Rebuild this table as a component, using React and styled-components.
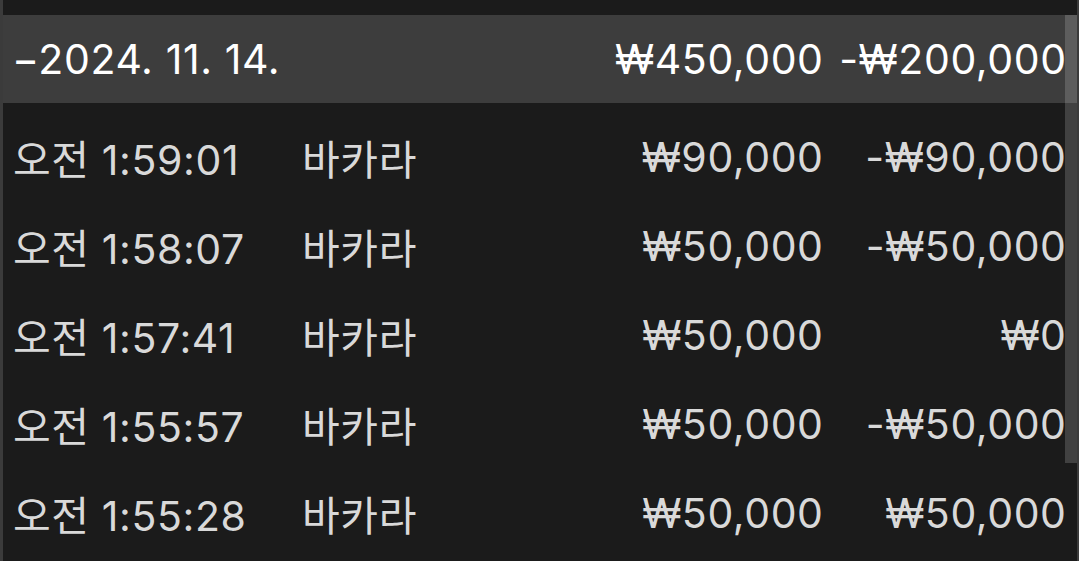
import styled, { createGlobalStyle } from 'styled-components';

const GlobalStyle = createGlobalStyle`
  html, body {
    margin: 0;
    padding: 0;
    background: #1b1b1b;
  }
`;

const Frame = styled.div`
  position: relative;
  box-sizing: border-box;
  height: 561px;
  padding-top: 15px;
  overflow: hidden;
  border-left: 3px solid #3b3b3b;
  border-right: 2px solid #3b3b3b;
  background: #1b1b1b;
  font-family: Inter, "Noto Sans CJK KR", sans-serif;
`;

const Row = styled.div`
  display: grid;
  grid-template-columns: 289px 1fr 220px 243px;
  align-items: center;
  box-sizing: border-box;
  height: ${(p) => (p.$header ? '88px' : '89px')};
  padding: 0 11px 0 10px;
  background: ${(p) => (p.$header ? '#3d3d3d' : 'transparent')};
  color: ${(p) => (p.$header ? '#ffffff' : '#d9d9d9')};
  font-size: 41px;
  letter-spacing: 0.6px;
  white-space: nowrap;
`;

const List = styled.div`
  padding-top: 9px;
`;

const Cell = styled.span`
  text-align: ${(p) => (p.$right ? 'right' : 'left')};
  margin-right: ${(p) => (p.$right ? '-0.6px' : '0')};
`;

const DateCell = styled.span`
  grid-column: 1 / 3;
  margin-left: -1px;
`;

const Thumb = styled.div`
  position: absolute;
  top: 15px;
  right: 0;
  width: 12px;
  height: 448px;
  background: rgba(255, 255, 255, 0.17);
`;

const rows = [
  { time: '오전 1:59:01', game: '바카라', bet: '₩90,000', profit: '-₩90,000' },
  { time: '오전 1:58:07', game: '바카라', bet: '₩50,000', profit: '-₩50,000' },
  { time: '오전 1:57:41', game: '바카라', bet: '₩50,000', profit: '₩0' },
  { time: '오전 1:55:57', game: '바카라', bet: '₩50,000', profit: '-₩50,000' },
  { time: '오전 1:55:28', game: '바카라', bet: '₩50,000', profit: '₩50,000' },
];

export default function App() {
  return (
    <Frame>
      <GlobalStyle />
      <Row $header>
        <DateCell>−2024. 11. 14.</DateCell>
        <Cell $right>₩450,000</Cell>
        <Cell $right>-₩200,000</Cell>
      </Row>
      <List>
        {rows.map((row) => (
          <Row key={row.time}>
            <Cell>{row.time}</Cell>
            <Cell>{row.game}</Cell>
            <Cell $right>{row.bet}</Cell>
            <Cell $right>{row.profit}</Cell>
          </Row>
        ))}
      </List>
      <Thumb />
    </Frame>
  );
}
